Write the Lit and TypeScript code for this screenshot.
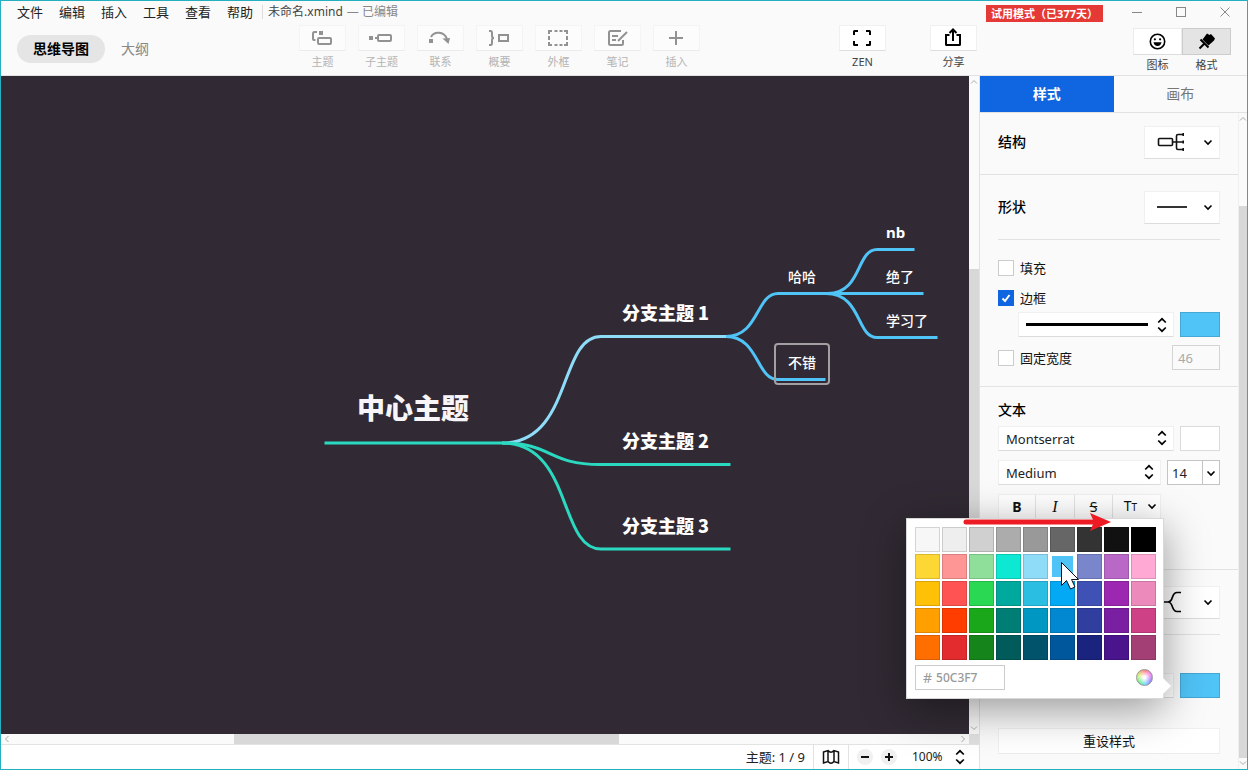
import { LitElement, html, svg, css } from "lit";
import { customElement, property, state } from "lit/decorators.js";
import { classMap } from "lit/directives/class-map.js";
import { styleMap } from "lit/directives/style-map.js";

const chevron = html`<svg class="chev" width="10" height="7" viewBox="0 0 10 7" aria-hidden="true">
  <path d="M1.500 1.500 5 5 8.500 1.500" fill="none" stroke="#000" stroke-width="1.600" />
</svg>`;

const updown = html`<svg class="updown" width="10" height="16" viewBox="0 0 10 16" aria-hidden="true">
  <path d="M1.200 5.500 5 1.800 8.800 5.500M1.200 10.500 5 14.200 8.800 10.500" fill="none" stroke="#000" stroke-width="1.700" />
</svg>`;

const toolIcons: Record<string, unknown> = {
  topic: svg`<path d="M7 6H4.500Q3 6 3 7.500V13Q3 14 4 14H5.500" fill="none" stroke="currentColor" stroke-width="2"/>
    <rect x="9" y="5" width="4" height="4" fill="currentColor"/>
    <rect x="8" y="12" width="13" height="6" rx="1" fill="none" stroke="currentColor" stroke-width="2"/>`,
  subtopic: svg`<rect x="0" y="10" width="4" height="4" fill="currentColor"/>
    <path d="M6 12h3" stroke="currentColor" stroke-width="2"/>
    <rect x="9" y="9" width="13" height="6" rx="1" fill="none" stroke="currentColor" stroke-width="2"/>`,
  relation: svg`<rect x="1" y="13" width="4" height="4" fill="currentColor"/>
    <path d="M3 11C6 5 16 5 19 13" fill="none" stroke="currentColor" stroke-width="2"/>
    <path d="M14.500 12.500 22 12 20.500 18z" fill="currentColor"/>`,
  summary: svg`<path d="M2 5h1.500Q5 5 5 7v3q0 2 2 2-2 0-2 2v3q0 2-1.500 2H2" fill="none" stroke="currentColor" stroke-width="2"/>
    <rect x="12" y="9" width="9" height="6" fill="none" stroke="currentColor" stroke-width="2"/>`,
  boundary: svg`<path d="M3 8V5h3M8.500 5h3M13.500 5h3M18 5h3v3M21 10v4M21 16v3h-3M16.500 19h-3M11.500 19h-3M6 19H3v-3M3 14v-4" fill="none" stroke="currentColor" stroke-width="2"/>`,
  note: svg`<path d="M16 5H5.500Q4 5 4 6.500v11Q4 19 5.500 19h11q1.500 0 1.500-1.500V14M7 10h6M7 14h4" fill="none" stroke="currentColor" stroke-width="2"/>
    <path d="M22 6 13 15" stroke="currentColor" stroke-width="2"/>`,
  insert: svg`<path d="M12 5v14M5 12h14" stroke="currentColor" stroke-width="2"/>`,
  zen: svg`<path d="M4 9V5.500Q4 5 4.500 5H8M16 5h3.500q.5 0 .5.500V9M20 15v3.500q0 .5-.5.500H16M8 19H4.500Q4 19 4 18.500V15" fill="none" stroke="currentColor" stroke-width="2"/>`,
  share: svg`<path d="M8.500 9H5v9.500q0 .5.500.500h13q.5 0 .5-.5V9h-3.500M12 15V4M8.500 7 12 3.500 15.500 7" fill="none" stroke="currentColor" stroke-width="2"/>`,
  smile: svg`<circle cx="11.500" cy="11.500" r="7.200" fill="none" stroke="currentColor" stroke-width="1.600"/>
    <circle cx="8.900" cy="9.300" r="1.100" fill="currentColor"/><circle cx="14.100" cy="9.300" r="1.100" fill="currentColor"/>
    <path d="M7.500 12.300h8q-.6 3.700-4 3.700t-4-3.700z" fill="currentColor"/>`,
  brush: svg`<path d="M12 3.500 14.500 5 16 4 20 8.500 19 10.500 13.500 15.500 7.500 9.500z" fill="currentColor"/>
    <path d="M5.500 9.500 13.500 17.500M9.500 13.500 4.500 18.500" fill="none" stroke="currentColor" stroke-width="2"/>`,
};

@customElement("tool-button")
class ToolButton extends LitElement {
  @property() icon = "";
  @property() label = "";
  @property({ type: Boolean }) muted = false;
  static styles = css`
    :host { display: block; }
    .tool {
      display: flex; flex-direction: column; align-items: center; gap: 3px;
      width: 47px; padding: 0; border: 0; background: none; font: inherit; color: #000;
    }
    .face {
      display: flex; align-items: center; justify-content: center; box-sizing: border-box;
      width: 47px; height: 26px; background: #fff; border: 1px solid #f0f0f0; border-bottom-color: #dedede;
    }
    .caption { font-size: 11px; line-height: 16px; color: #444; white-space: nowrap; }
    .muted .face { color: #929292; background: #fcfcfc; border-color: #f4f4f4; border-bottom-color: #ebebeb; }
    .muted .caption { color: #b4b4b4; }
  `;
  render() {
    return html`<button class=${classMap({ tool: true, muted: this.muted })}>
      <span class="face"><svg width="25" height="24" viewBox="0 0 25 24" aria-hidden="true">${toolIcons[this.icon]}</svg></span>
      <span class="caption">${this.label}</span>
    </button>`;
  }
}

@customElement("mind-map")
class MindMap extends LitElement {
  static styles = css`
    :host { display: block; flex: 1; min-width: 0; min-height: 0; background: #312a34; overflow: hidden; }
    svg { display: block; width: 100%; height: 100%; }
    path { fill: none; stroke-width: 3; }
    text { fill: #fff; font-family: "Noto Sans", "Noto Sans CJK SC", sans-serif; }
    .central { font-size: 28px; font-weight: 900; fill: #f7f5f8; font-family: "Noto Sans CJK SC", sans-serif; }
    .branch { font-size: 18px; font-weight: 900; font-family: "Noto Sans CJK SC", sans-serif; }
    .leaf { font-size: 14px; font-weight: 500; }
    .strong { font-size: 15px; font-weight: 700; }
    .teal { stroke: #2bd9c0; }
    .pale { stroke: #8edcf8; }
    .sky { stroke: #50c3f7; }
    .selection { fill: none; stroke: #a3a0a3; stroke-width: 2; }
  `;
  render() {
    return html`<svg role="img" aria-label="中心主题">
      <path class="pale" d="M501 367C572 367 557 260.500 600 260.500H729" />
      <path class="teal" d="M323.500 367H501C551 367 547 388.500 599 388.500H729.500" />
      <path class="teal" d="M501 367C572 367 557 473 600 473H729.500" />
      <path class="sky" d="M725 260.500C758 260.500 755 217.500 777 217.500H827C861 217.500 855 173.500 876 173.500H913.500" />
      <path class="sky" d="M725 260.500C758 260.500 755 303.500 777 303.500H824.500" />
      <path class="sky" d="M825 217.500H922.500" />
      <path class="sky" d="M825 217.500C861 217.500 855 261.500 876 261.500H936.500" />
      <rect class="selection" x="774" y="268" width="54" height="40" rx="3" />
      <text class="central" x="356" y="343">中心主题</text>
      <text class="branch" x="621" y="244">分支主题 1</text>
      <text class="branch" x="621" y="372">分支主题 2</text>
      <text class="branch" x="621" y="457">分支主题 3</text>
      <text class="leaf" x="787" y="206">哈哈</text>
      <text class="leaf" x="787" y="292">不错</text>
      <text class="strong" x="885" y="162">nb</text>
      <text class="leaf" x="885" y="206">绝了</text>
      <text class="leaf" x="885" y="250">学习了</text>
    </svg>`;
  }
}

const palette = [
  "#f7f7f7", "#eeeeee", "#d0d0d0", "#acacac", "#999999", "#666666", "#333333", "#111111", "#000000",
  "#fdd835", "#ff9696", "#8fdf9a", "#0ce8d2", "#8edcf8", "#50c3f7", "#7986cb", "#ba68c8", "#ffa9d4",
  "#ffc107", "#ff5252", "#2bd853", "#00a99d", "#2abfe2", "#03a9f4", "#3f51b5", "#9c27b0", "#ec8abb",
  "#ffa000", "#ff3d00", "#1aa81a", "#007d74", "#0097c2", "#0288d1", "#303f9f", "#7b1fa2", "#cf4187",
  "#ff6f00", "#e32c2e", "#15851b", "#005b5a", "#00536a", "#01579b", "#1a237e", "#4a148c", "#a33f74",
];

@customElement("color-popup")
class ColorPopup extends LitElement {
  @state() private chosen = "#50c3f7";
  static styles = css`
    :host {
      display: block; box-sizing: border-box; padding: 8px; background: #fff;
      border: 1px solid #d8d8d8; box-shadow: 0 10px 40px rgba(0, 0, 0, 0.4);
    }
    .notch { position: absolute; right: -8px; bottom: 4px; width: 8px; height: 16px; }
    .grid { display: grid; grid-template-columns: repeat(9, 25px); gap: 2px; }
    .swatch { height: 25px; padding: 0; border: 1px solid rgba(0, 0, 0, 0.14); }
    .chosen { border: 2px solid #fff; }
    .foot { display: flex; align-items: center; justify-content: space-between; margin-top: 5px; }
    .hex {
      display: flex; align-items: center; gap: 4px; box-sizing: border-box; width: 90px; height: 25px; padding: 0 7px;
      border: 1px solid #ccc; font-size: 14px; color: #999;
    }
    .hex input { flex: 1; min-width: 0; padding: 0; border: 0; outline: 0; font: inherit; font-size: 12px; font-weight: 500; color: #999; background: none; }
    .wheel {
      width: 17px; height: 17px; margin-right: 2px; padding: 0; border: 1px solid #999; border-radius: 50%;
      background: radial-gradient(circle, #fff 10%, rgba(255, 255, 255, 0) 80%),
        conic-gradient(#f66, #e6e 60deg, #86f 120deg, #5cf 170deg, #5e7 230deg, #ce5 290deg, #f66);
    }
    .pointer { position: absolute; left: 56px; top: -9px; pointer-events: none; }
  `;
  render() {
    return html`
      <div class="grid">
        ${palette.map((c) => html`<button
          class=${classMap({ swatch: true, chosen: c === this.chosen })}
          style=${styleMap({ background: c })} aria-label=${c}
          @click=${() => (this.chosen = c)}></button>`)}
      </div>
      <div class="foot">
        <label class="hex">#<input aria-label="颜色" .value=${this.chosen.slice(1).toUpperCase()} /></label>
        <button class="wheel" aria-label="色轮"></button>
      </div>
      <svg class="notch" viewBox="0 0 8 16" aria-hidden="true"><path d="M0 0 8 8 0 16z" fill="#fff" /></svg>
      <svg class="pointer" width="150" height="82" viewBox="0 0 150 82" aria-hidden="true">
        <path d="M3 12H132" stroke="#ed1c24" stroke-width="5" stroke-linecap="round" />
        <path d="M127 3 148 12 127 21 131 12z" fill="#ed1c24" />
        <path d="M98.500 52.500V75.500L103.500 70.500 107.500 79 112 77 108.500 69.500H115.500z" fill="#fff" stroke="#112" />
      </svg>`;
  }
}

@customElement("style-panel")
class StylePanel extends LitElement {
  @state() private border = true;
  static styles = css`
    :host { display: flex; flex-direction: column; width: 268px; flex: none; box-sizing: border-box; border-left: 1px solid #e2e2e2; }
    button, input, select { font: inherit; color: inherit; }
    .tabs { display: grid; grid-template-columns: 1fr 1fr; border-bottom: 1px solid #e2e2e2; }
    .tab { height: 36px; padding: 0; border: 0; background: none; font-size: 14px; color: #777; }
    .tab.on { background: #1065e0; color: #fff; font-weight: 700; }
    .body { display: flex; flex: 1; min-height: 0; }
    .groups { flex: 1; min-width: 0; }
    .group { padding: 0 18px; border-bottom: 1px solid #e2e2e2; }
    .group:last-child { border-bottom: 0; }
    .row { display: flex; align-items: center; gap: 6px; }
    .lead { justify-content: space-between; height: 32px; padding: 16px 0; }
    .first { padding-top: 13px; }
    .inner { border-bottom: 1px solid #e2e2e2; }
    .name { margin: 0; font-size: 14px; line-height: 20px; font-weight: 500; color: #000; }
    .field {
      box-sizing: border-box; background: #fff; border: 1px solid #f0f0f0; border-bottom-color: #dcdcdc; border-radius: 0;
    }
    .pick { display: flex; align-items: center; justify-content: space-between; width: 76px; height: 33px; padding: 0 6px 0 12px; }
    .line { display: flex; align-items: center; justify-content: space-between; width: 156px; height: 25px; padding: 0 6px 0 7px; }
    .stroke { width: 122px; height: 3px; background: #000; }
    .indent { padding-left: 20px; }
    .chip { box-sizing: border-box; width: 40px; height: 25px; padding: 0; border: 1px solid rgba(0, 0, 0, 0.14); background: #50c3f7; }
    .blank { background: #fff; }
    .check { display: flex; align-items: center; gap: 6px; font-size: 13px; line-height: 18px; color: #111; }
    .box {
      appearance: none; box-sizing: border-box; width: 16px; height: 16px; margin: 0; border: 1px solid #ccc; background: #fff;
    }
    .box:checked {
      border-color: #1065e0;
      background: #1065e0 url("data:image/svg+xml,%3Csvg xmlns='http://www.w3.org/2000/svg' viewBox='0 0 14 14'%3E%3Cpath d='M3.500 7.500 6 10 10.500 4' fill='none' stroke='white' stroke-width='2'/%3E%3C/svg%3E");
    }
    .shape { padding-bottom: 16px; }
    .fill { margin-top: 19px; }
    .edge { margin-top: 12px; margin-bottom: 5px; }
    .fixed { justify-content: space-between; margin-top: 8px; }
    .width { box-sizing: border-box; width: 48px; height: 25px; padding: 0 5px; border: 1px solid #d4d4d4; background: #fafafa; font-size: 13px; color: #aaa; }
    .text { display: flex; flex-direction: column; gap: 9px; padding-top: 13px; height: 169px; }
    .text .name { margin-bottom: -3px; }
    .drop { position: relative; display: flex; flex: 1; }
    .drop select { appearance: none; width: 100%; height: 25px; padding: 0 24px 0 7px; font-size: 13px; color: #222; }
    .drop .updown { position: absolute; right: 7px; top: 4px; pointer-events: none; }
    .size { display: flex; box-sizing: border-box; width: 53px; height: 25px; border: 1px solid #c4c4c4; background: #fff; }
    .size input { flex: 1; min-width: 0; padding: 0 4px; border: 0; font-size: 13px; color: #222; }
    .size button { width: 17px; padding: 0 0 2px; border: 0; border-left: 1px solid #c4c4c4; background: none; }
    .marks { display: grid; grid-template-columns: 37px 39px 38px 47px; width: 163px; height: 25px; padding: 0; }
    .marks button { padding: 0; border: 0; border-right: 1px solid #e4e4e4; background: none; font-size: 14px; line-height: 20px; }
    .marks button:last-child { display: flex; align-items: center; justify-content: flex-end; gap: 10px; padding-right: 3px; border: 0; }
    .marks .bold { font-weight: 700; }
    .marks .ital { font-family: "Liberation Serif", serif; font-style: italic; font-size: 16px; }
    .struck { text-decoration: line-through; }
    .small { font-size: 10px; }
    .branch { position: relative; margin-top: 38px; }
    color-popup { position: absolute; right: 56px; bottom: -1px; width: 258px; z-index: 2; }
    .reset { display: block; width: 100%; height: 26px; margin-top: 30px; padding: 0; font-size: 13px; color: #111; border-bottom-color: #ececec; }
    .scroll { display: flex; flex-direction: column; align-items: center; box-sizing: border-box; width: 9px; border-left: 1px solid #f0f0f0; }
    .scroll svg { margin: 3px 0; flex: none; }
    .before { flex: 82; }
    .thumb { flex: 551; width: 100%; background: #d8d8d8; }
  `;
  render() {
    return html`
      <div class="tabs" role="tablist">
        <button class="tab on" role="tab">样式</button><button class="tab" role="tab">画布</button>
      </div>
      <div class="body">
        <div class="groups">
          <div class="group">
            <div class="row lead first"><h2 class="name">结构</h2>
              <button class="field pick" aria-label="结构" aria-haspopup="listbox">
                <svg width="30" height="20" viewBox="0 0 30 20" fill="none" stroke="#111" stroke-width="1.600">
                  <rect x="1.500" y="6.500" width="14" height="7" rx="1" /><path d="M16 10H27M27 2.500H21Q19.500 2.500 19.500 4V16Q19.500 17.500 21 17.500H27" />
                  <path d="M26.200 1v3M26.200 8.500v3M26.200 16v3" />
                </svg>${chevron}
              </button></div>
          </div>
          <div class="group shape">
            <div class="row lead inner"><h2 class="name">形状</h2>
              <button class="field pick" aria-label="形状" aria-haspopup="listbox">
                <svg width="32" height="4" viewBox="0 0 32 4"><path d="M0 2H30" stroke="#333" stroke-width="2" /></svg>${chevron}
              </button></div>
            <label class="check fill"><input class="box" type="checkbox" />填充</label>
            <label class="check edge"><input class="box" type="checkbox" .checked=${this.border}
              @change=${(e: Event) => (this.border = (e.target as HTMLInputElement).checked)} />边框</label>
            <div class="row indent">
              <button class="field line" aria-label="边框粗细" aria-haspopup="listbox"><span class="stroke"></span>${updown}</button>
              <button class="chip" aria-label="边框颜色"></button>
            </div>
            <div class="row fixed">
              <label class="check"><input class="box" type="checkbox" />固定宽度</label>
              <input class="width" aria-label="宽度" value="46" disabled />
            </div>
          </div>
          <div class="group text">
            <h2 class="name">文本</h2>
            <div class="row">
              <div class="drop"><select class="field" aria-label="字体"><option>Montserrat</option></select>${updown}</div>
              <button class="chip blank" aria-label="文本颜色"></button>
            </div>
            <div class="row">
              <div class="drop"><select class="field" aria-label="字重"><option>Medium</option></select>${updown}</div>
              <div class="size"><input aria-label="字号" value="14" /><button aria-label="选择字号">${chevron}</button></div>
            </div>
            <div class="field marks">
              <button class="bold">B</button><button class="ital">I</button><button class="struck">S</button>
              <button aria-label="大小写"><span>T<span class="small">T</span></span>${chevron}</button>
            </div>
          </div>
          <div class="group">
            <div class="row lead inner"><h2 class="name">分支</h2>
              <button class="field pick" aria-label="分支" aria-haspopup="listbox">
                <svg width="30" height="22" viewBox="0 0 30 22"><path d="M0 11H11Q14 11 15.500 6 17 1.500 20 1.500H24M11 11Q14 11 15.500 16 17 20.500 20 20.500H24" fill="none" stroke="#000" stroke-width="1.700" /></svg>${chevron}
              </button></div>
            <div class="row indent branch">
              <button class="field line" aria-label="线条粗细" aria-haspopup="listbox"><span class="stroke"></span>${updown}</button>
              <button class="chip" aria-label="线条颜色"></button>
              <color-popup></color-popup>
            </div>
            <button class="field reset">重设样式</button>
          </div>
        </div>
        <div class="scroll" aria-hidden="true">
          <svg width="8" height="5" viewBox="0 0 8 5"><path d="M1 4.500 4 1.500 7 4.500" fill="none" stroke="#aaa" /></svg>
          <span class="before"></span><span class="thumb"></span>
          <svg width="8" height="5" viewBox="0 0 8 5"><path d="M1 .5 4 3.500 7 .5" fill="none" stroke="#aaa" /></svg>
        </div>
      </div>`;
  }
}

@customElement("app-root")
class AppRoot extends LitElement {
  static styles = css`
    :host {
      display: flex; flex-direction: column; box-sizing: border-box; width: 100%; height: 100vh; overflow: hidden;
      border: 1px solid #24b0bf; background: #fafafa; color: #111;
      font-family: "Noto Sans", "Noto Sans CJK SC", sans-serif; font-size: 13px; line-height: 18px;
    }
    button, select { font: inherit; color: inherit; }
    header { flex: none; border-bottom: 1px solid #e2e2e2; }
    .title { display: flex; align-items: center; height: 22px; padding: 0 16px; }
    .menu { display: flex; gap: 16px; padding-right: 9px; border-right: 1px solid #ddd; line-height: 14px; }
    .menu button { padding: 0; border: 0; background: none; color: #222; }
    .file { margin-left: 5px; font-size: 12px; color: #444; }
    .saved { margin-left: 4px; font-size: 12px; color: #888; }
    .trial { margin-top: 3px; margin-left: auto; padding: 0 5px; background: #e53935; color: #fff; font-size: 11px; line-height: 17px; font-weight: 700; white-space: nowrap; }
    .window { display: flex; gap: 32px; margin-left: 28px; }
    .window button { display: flex; padding: 0; border: 0; background: none; }
    .bar { display: flex; align-items: flex-start; height: 50px; padding: 2px 16px 0; }
    .views { display: flex; align-items: center; gap: 16px; margin-top: 10px; font-size: 14px; }
    .views button { padding: 0; border: 0; background: none; color: #888; white-space: nowrap; }
    .views .on { padding: 0 16px; height: 28px; border-radius: 14px; background: #e5e5e5; color: #000; font-weight: 700; }
    .tools { display: flex; gap: 12px; margin-left: 150px; }
    .actions { display: flex; gap: 44px; margin-left: auto; margin-right: 156px; }
    .modes { display: grid; grid-template-columns: 49px 49px; margin-top: 3px; }
    .modes button { display: flex; flex-direction: column; align-items: center; gap: 2px; padding: 0; border: 0; background: none; font-size: 11px; line-height: 16px; color: #444; }
    .face { display: flex; align-items: center; justify-content: center; box-sizing: border-box; width: 49px; height: 27px; background: #fff; border: 1px solid #ececec; border-bottom-color: #ddd; color: #000; }
    .modes .on .face { background: #e4e4e4; border-color: #ccc; }
    main { display: flex; flex: 1; min-height: 0; }
    .left { display: flex; flex-direction: column; flex: 1; min-width: 0; }
    .stage { display: flex; flex: 1; min-height: 0; }
    .vscroll { display: flex; flex-direction: column; align-items: center; width: 10px; flex: none; }
    .vscroll svg { flex: none; margin: 3px 0; }
    .vbefore { flex: 182; }
    .vthumb { flex: 425; width: 100%; background: #d8d8d8; }
    .vafter { flex: 29; }
    .hscroll { display: flex; align-items: center; height: 10px; flex: none; }
    .hscroll svg { flex: none; margin: 0 3px; }
    .hbefore { flex: 222; }
    .hthumb { flex: 385; height: 100%; background: #d8d8d8; }
    .hafter { flex: 339; }
    .corner { width: 10px; height: 100%; background: #e0e0e0; }
    .status { display: flex; justify-content: flex-end; align-items: stretch; height: 24px; flex: none; border-top: 1px solid #e2e2e2; background: #fff; color: #222; }
    .status > * { display: flex; align-items: center; }
    .count { padding-right: 8px; }
    .map { width: 36px; justify-content: center; padding: 0; border: 0; border-left: 1px solid #e2e2e2; border-right: 1px solid #e2e2e2; background: none; }
    .zoom { gap: 8px; padding-left: 8px; }
    .round { display: flex; align-items: center; justify-content: center; width: 16px; height: 16px; padding: 0; border: 0; border-radius: 50%; background: #f0f0f0; }
    .level { position: relative; padding: 0 14px 0 15px; }
    .level select { appearance: none; width: 53px; padding: 0 12px 0 0; border: 0; background: none; font-size: 12px; }
    .level .updown { position: absolute; right: 14px; pointer-events: none; }
  `;
  render() {
    const tools = [["topic", "主题"], ["subtopic", "子主题"], ["relation", "联系"], ["summary", "概要"], ["boundary", "外框"], ["note", "笔记"], ["insert", "插入"]];
    return html`
      <header>
        <div class="title">
          <nav class="menu">${["文件", "编辑", "插入", "工具", "查看", "帮助"].map((m) => html`<button>${m}</button>`)}</nav>
          <span class="file">未命名.xmind</span><span class="saved">— 已编辑</span>
          <span class="trial">试用模式（已377天）</span>
          <div class="window">
            <button aria-label="最小化"><svg width="12" height="12"><path d="M1 6.500h10" stroke="#888" /></svg></button>
            <button aria-label="最大化"><svg width="12" height="12"><rect x="1.500" y="1.500" width="9" height="9" fill="none" stroke="#888" /></svg></button>
            <button aria-label="关闭"><svg width="12" height="12"><path d="M1.500 1.500l9 9M10.500 1.500l-9 9" stroke="#888" /></svg></button>
          </div>
        </div>
        <div class="bar">
          <div class="views"><button class="on">思维导图</button><button>大纲</button></div>
          <div class="tools">${tools.map(([i, l]) => html`<tool-button icon=${i} label=${l} muted></tool-button>`)}</div>
          <div class="actions"><tool-button icon="zen" label="ZEN"></tool-button><tool-button icon="share" label="分享"></tool-button></div>
          <div class="modes">
            <button><span class="face"><svg width="24" height="24" viewBox="0 0 24 24">${toolIcons.smile}</svg></span>图标</button>
            <button class="on"><span class="face"><svg width="24" height="24" viewBox="0 0 24 24">${toolIcons.brush}</svg></span>格式</button>
          </div>
        </div>
      </header>
      <main>
        <div class="left">
          <div class="stage">
            <mind-map></mind-map>
            <div class="vscroll" aria-hidden="true">
              <svg width="8" height="5"><path d="M1 4.500 4 1.500 7 4.500" fill="none" stroke="#aaa" /></svg>
              <span class="vbefore"></span><span class="vthumb"></span><span class="vafter"></span>
              <svg width="8" height="5"><path d="M1 .5 4 3.500 7 .5" fill="none" stroke="#aaa" /></svg>
            </div>
          </div>
          <div class="hscroll" aria-hidden="true">
            <svg width="5" height="8"><path d="M4.500 1 1.500 4 4.500 7" fill="none" stroke="#aaa" /></svg>
            <span class="hbefore"></span><span class="hthumb"></span><span class="hafter"></span>
            <svg width="5" height="8"><path d="M.5 1 3.500 4 .5 7" fill="none" stroke="#aaa" /></svg>
            <span class="corner"></span>
          </div>
          <footer class="status">
            <span class="count">主题: 1 / 9</span>
            <button class="map" aria-label="导航图"><svg width="18" height="16" viewBox="0 0 18 16"><path d="M1.500 3 6 1.500Q9 5 12 1.500L16.500 3V14L12 12.500Q9 16 6 12.500L1.500 14ZM6 1.500v11M12 1.500v11" fill="none" stroke="#111" stroke-width="1.500" /></svg></button>
            <div class="zoom">
              <button class="round" aria-label="缩小"><svg width="8" height="8"><path d="M0 4h8" stroke="#111" stroke-width="2" /></svg></button>
              <button class="round" aria-label="放大"><svg width="8" height="8"><path d="M0 4h8M4 0v8" stroke="#111" stroke-width="2" /></svg></button>
            </div>
            <div class="level"><select aria-label="缩放"><option>100%</option></select>${updown}</div>
          </footer>
        </div>
        <style-panel></style-panel>
      </main>`;
  }
}
